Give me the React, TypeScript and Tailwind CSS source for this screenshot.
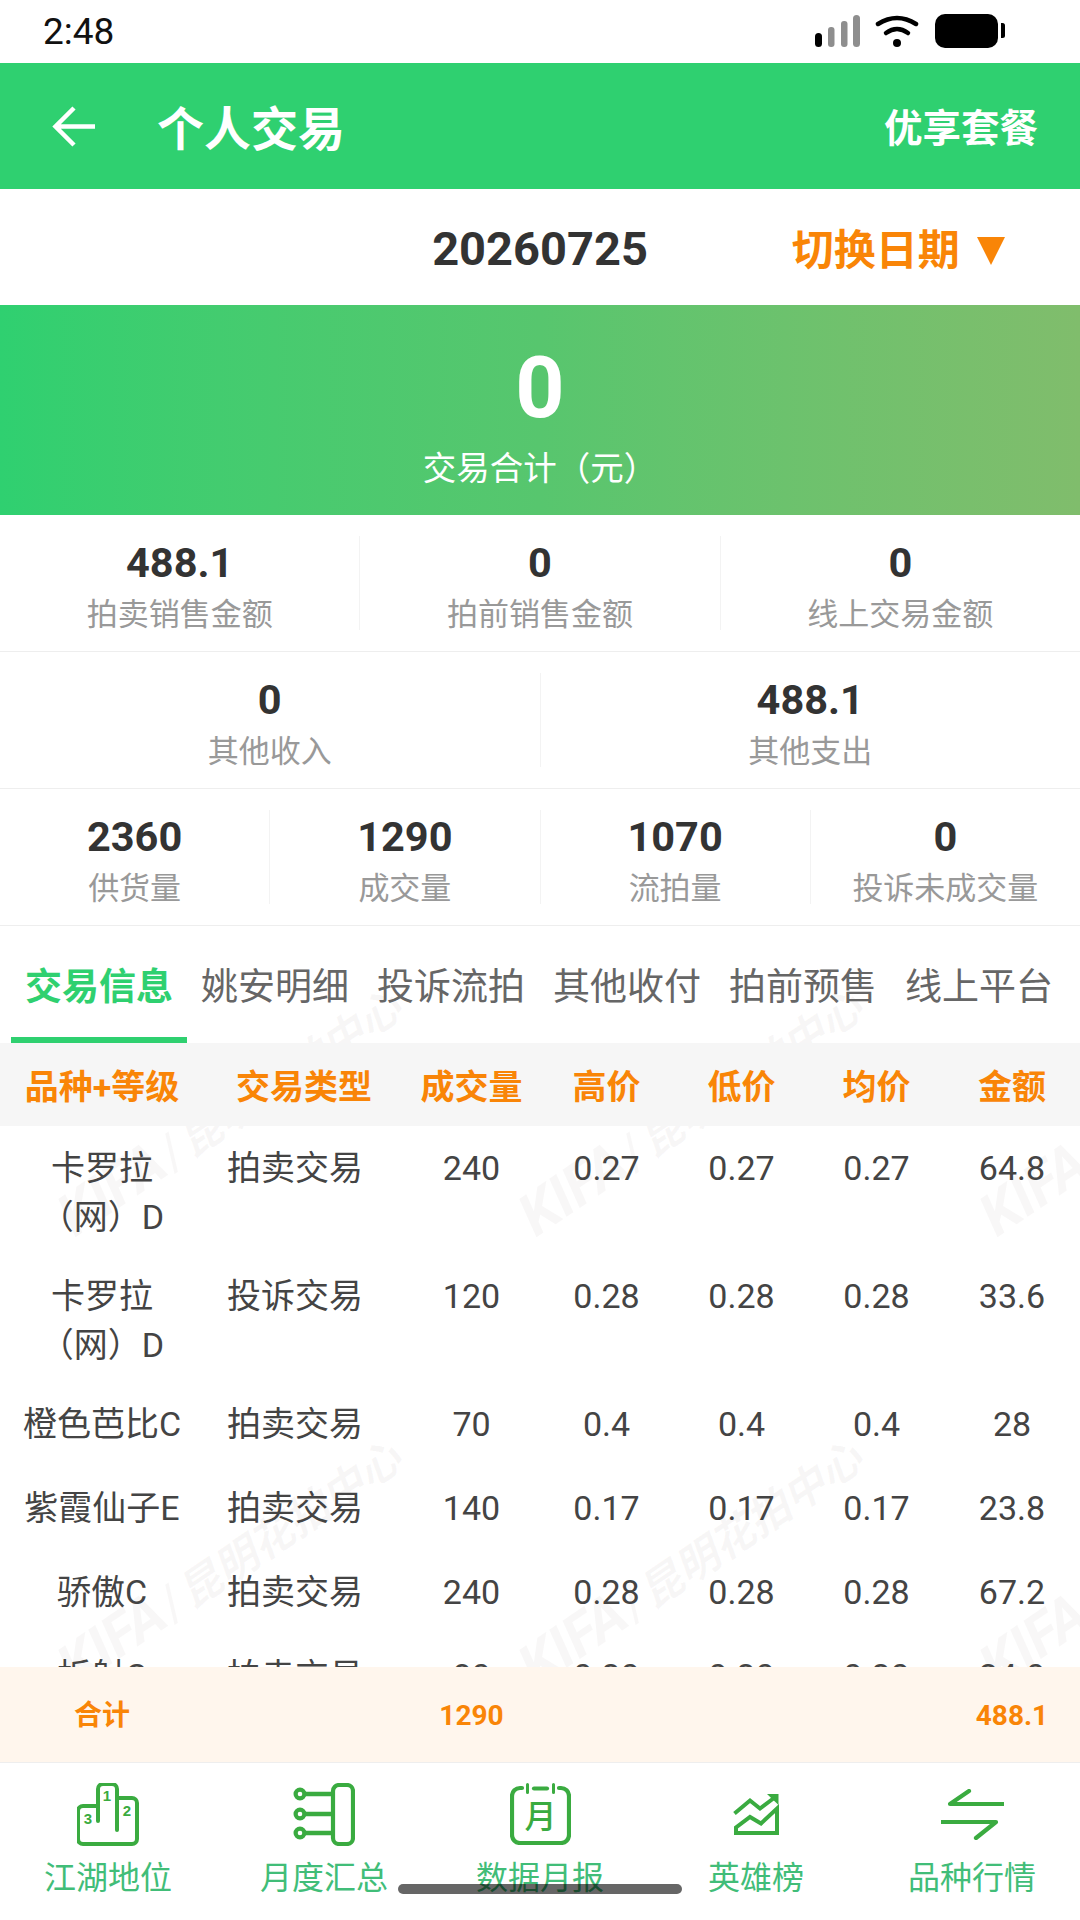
const FONT = "font-[Roboto,'Noto_Sans_CJK_SC',sans-serif]";

function Stat({ value, label }: { value: string; label: string }) {
  return (
    <div className="flex-1 h-[94px] flex flex-col items-center border-r border-[#f3f3f3] last:border-r-0">
      <div className="text-[41.500px] leading-[54px] font-bold text-[#333333]">{value}</div>
      <div className="text-[31px] leading-[50px] text-[#999999] whitespace-nowrap">{label}</div>
    </div>
  );
}

function StatRow({ items }: { items: [string, string][] }) {
  return (
    <div className="h-[137px] pt-[21px] flex border-b border-[#eeeeee] bg-white">
      {items.map(([v, l]) => (
        <Stat key={l} value={v} label={l} />
      ))}
    </div>
  );
}

const GRID = "grid grid-cols-[204px_200px_135px_135px_135px_135px_136px] text-center";

const rows: [string, string, string, string, string, string, string][] = [
  ["卡罗拉\n（网）D", "拍卖交易", "240", "0.27", "0.27", "0.27", "64.8"],
  ["卡罗拉\n（网）D", "投诉交易", "120", "0.28", "0.28", "0.28", "33.6"],
  ["橙色芭比C", "拍卖交易", "70", "0.4", "0.4", "0.4", "28"],
  ["紫霞仙子E", "拍卖交易", "140", "0.17", "0.17", "0.17", "23.8"],
  ["骄傲C", "拍卖交易", "240", "0.28", "0.28", "0.28", "67.2"],
  ["折射C", "拍卖交易", "80", "0.30", "0.30", "0.30", "24.0"],
];

function Mark({ cls }: { cls: string }) {
  return (
    <div className={`absolute flex items-baseline whitespace-nowrap leading-none font-bold italic text-[#8a7070]/[0.06] origin-bottom-left rotate-[-34deg] ${cls}`}>
      <span className="text-[58px] leading-none">KIFA</span>
      <span className="text-[50px] leading-none font-normal not-italic mx-[2px]">/</span>
      <span className="text-[43px] leading-none">昆明花拍中心</span>
    </div>
  );
}

function Watermark() {
  return (
    <div className="absolute inset-0 pointer-events-none">
      <Mark cls="left-[80px] top-[261px]" />
      <Mark cls="left-[541px] top-[261px]" />
      <Mark cls="left-[1002px] top-[261px]" />
      <Mark cls="left-[80px] top-[712px]" />
      <Mark cls="left-[541px] top-[712px]" />
      <Mark cls="left-[1002px] top-[712px]" />
    </div>
  );
}

const navIconCls = "stroke-[#3aab40] fill-none";

function IconPodium() {
  const num = { textAnchor: "middle" as const, fontSize: 15, fontWeight: 700, fontFamily: "Liberation Sans", fill: "#3aab40", stroke: "none" };
  return (
    <svg width="62" height="63" viewBox="0 0 62 63" className={navIconCls} strokeWidth="4" strokeLinecap="round" strokeLinejoin="round">
      <path d="M21 38V6a5 5 0 0 1 5-5h9a5 5 0 0 1 5 5v41" />
      <path d="M40 15h15a5 5 0 0 1 5 5v36a5 5 0 0 1-5 5H6a5 5 0 0 1-5-5V28a5 5 0 0 1 5-5h15" />
      <text x="30" y="18" {...num}>1</text>
      <text x="50" y="33" {...num}>2</text>
      <text x="11" y="41" {...num}>3</text>
    </svg>
  );
}

function IconSummary() {
  return (
    <svg width="62" height="63" viewBox="0 0 62 63" className={navIconCls} strokeWidth="4.200">
      <rect x="40" y="2" width="20" height="59" rx="6" />
      <circle cx="7" cy="11" r="4.400" />
      <circle cx="7" cy="31" r="4.400" />
      <circle cx="7" cy="50" r="4.400" />
      <path d="M11 11h29M11 31h29M11 50h29" strokeWidth="4.500" />
    </svg>
  );
}

function IconCalendar() {
  return (
    <svg width="61" height="62" viewBox="0 0 61 62" className={navIconCls} strokeWidth="4.200" strokeLinecap="round">
      <path d="M12 5h-2a8 8 0 0 0-8 8v39a8 8 0 0 0 8 8h41a8 8 0 0 0 8-8V13a8 8 0 0 0-8-8h-2" />
      <path d="M17.500 1.500v8M43.500 1.500v8" strokeWidth="3" />
      <path d="M24 5.500h13" />
      <text x="30.500" y="45" textAnchor="middle" fontSize="32" fontWeight="500" fontFamily="'Noto Sans CJK SC'" fill="#3aab40" stroke="none">月</text>
    </svg>
  );
}

function IconChart() {
  return (
    <svg width="46" height="41" viewBox="0 0 46 41" className={navIconCls} strokeWidth="4">
      <path d="M1.500 19.500 17 6.500l10 8L41 4" />
      <path d="M34 0h11.500v11z" fill="#3aab40" stroke="none" />
      <path d="M3 39V33.500L17 23l11 6.500L44 14.500V39Z" />
    </svg>
  );
}

function IconSwap() {
  return (
    <svg width="63" height="51" viewBox="0 0 63 51" className={navIconCls} strokeWidth="4.200" strokeLinecap="round" strokeLinejoin="round">
      <path d="M62 15H9L28 2" />
      <path d="M1 33h54L35 49" />
    </svg>
  );
}

const nav: [string, () => React.ReactElement][] = [
  ["江湖地位", IconPodium],
  ["月度汇总", IconSummary],
  ["数据月报", IconCalendar],
  ["英雄榜", IconChart],
  ["品种行情", IconSwap],
];

export default function App() {
  return (
    <div className={`relative w-[1080px] h-[1920px] overflow-hidden bg-white flex flex-col ${FONT}`}>
      {/* status bar */}
      <div className="h-[63px] shrink-0 flex items-center justify-between pl-[43px] pr-[75px] bg-white">
        <span className="text-[37px] leading-none text-[#111111] -mt-[1px]">2:48</span>
        <svg width="190" height="36" viewBox="815 13 190 36" className="-mt-[2px]">
          <rect x="815" y="33" width="7" height="14" rx="3.500" fill="#000" />
          <rect x="828" y="27" width="6.500" height="20" rx="3" fill="#8e8e8e" />
          <rect x="841" y="21" width="6.500" height="26" rx="3" fill="#8e8e8e" />
          <rect x="853" y="15" width="7" height="32" rx="3.500" fill="#8e8e8e" />
          <path d="M878 24q19-12 38 0" fill="none" stroke="#000" strokeWidth="4.500" strokeLinecap="round" />
          <path d="M886 33q11-8 22 0" fill="none" stroke="#000" strokeWidth="4.500" strokeLinecap="round" />
          <circle cx="897" cy="43" r="4" fill="#000" />
          <rect x="935" y="14" width="63" height="34" rx="10" fill="#000" />
          <path d="M1001 23h1.500a2.500 2.500 0 0 1 2.500 2.500v10a2.500 2.500 0 0 1-2.500 2.500H1001Z" fill="#000" />
        </svg>
      </div>

      {/* header */}
      <div className="h-[126px] shrink-0 bg-[#2fd070] flex items-center pl-[52px] pr-[42px] text-white">
        <svg width="43" height="41" viewBox="0 0 43 41" fill="none" stroke="#fff" strokeWidth="4.500">
          <path d="M43 20.500H4M22 2 3.500 20.500 22 39" />
        </svg>
        <span className="ml-[62px] mt-[7px] text-[47px] font-bold leading-none">个人交易</span>
        <span className="ml-auto mt-[7px] text-[38.500px] font-bold leading-none">优享套餐</span>
      </div>

      {/* date */}
      <div className="h-[116px] shrink-0 grid grid-cols-[1fr_auto_1fr] items-center bg-white">
        <span />
        <span className="mt-[3px] text-[47px] font-bold text-[#333333] leading-none">20260725</span>
        <div className="mt-[7px] pl-[144px] flex items-center text-[#f98507] font-bold">
          <span className="text-[42px] leading-none whitespace-nowrap">切换日期</span>
          <span className="ml-[17px] w-0 h-0 border-l-[14px] border-r-[14px] border-t-[28px] border-l-transparent border-r-transparent border-t-[#f98507]" />
        </div>
      </div>

      {/* total */}
      <div className="h-[210px] shrink-0 bg-gradient-to-r from-[#2fd070] via-[#57c66e] to-[#80bd6c] flex flex-col items-center text-white">
        <div className="mt-[36px] text-[86px] leading-[94px] font-bold">0</div>
        <div className="mt-[10px] text-[33.500px] leading-[48px]">交易合计（元）</div>
      </div>

      {/* stats */}
      <StatRow items={[["488.1", "拍卖销售金额"], ["0", "拍前销售金额"], ["0", "线上交易金额"]]} />
      <StatRow items={[["0", "其他收入"], ["488.1", "其他支出"]]} />
      <StatRow items={[["2360", "供货量"], ["1290", "成交量"], ["1070", "流拍量"], ["0", "投诉未成交量"]]} />

      {/* tabs + table */}
      <div className="relative flex-1 min-h-0 overflow-hidden flex flex-col">
        <Watermark />
        <div className="relative h-[117px] shrink-0 flex pl-[11px]">
          {["交易信息", "姚安明细", "投诉流拍", "其他收付", "拍前预售", "线上平台"].map((t, i) => (
            <div
              key={t}
              className={
                i === 0
                  ? "w-[176px] h-full flex items-center justify-center text-[37px] font-bold text-[#2fd070] border-b-[6px] border-[#2fd070] pt-[13px]"
                  : "w-[176px] h-full flex items-center justify-center text-[37px] text-[#666666] pt-[7px]"
              }
            >
              {t}
            </div>
          ))}
        </div>
        <div className={`relative ${GRID} h-[83px] shrink-0 items-center bg-[#f6f6f6] pt-[5px] text-[34px] font-bold text-[#f98507]`}>
          <span>品种+等级</span>
          <span>交易类型</span>
          <span>成交量</span>
          <span>高价</span>
          <span>低价</span>
          <span>均价</span>
          <span>金额</span>
        </div>
        <div className="relative flex-1 min-h-0 overflow-hidden text-[34px] leading-[49px] text-[#444444]">
          {rows.map((r, i) => (
            <div key={i} className={`${GRID} pt-[18px] pb-[12px] min-h-[84px]`}>
              <span className="whitespace-pre-line">{r[0]}</span>
              <span className="pr-[18px]">{r[1]}</span>
              <span>{r[2]}</span>
              <span>{r[3]}</span>
              <span>{r[4]}</span>
              <span>{r[5]}</span>
              <span>{r[6]}</span>
            </div>
          ))}
        </div>
      </div>

      {/* total footer */}
      <div className={`${GRID} h-[96px] shrink-0 items-center bg-[#fff6ed] border-b border-[#eeeeee] pt-[2px] text-[28px] font-bold text-[#f98507]`}>
        <span>合计</span>
        <span />
        <span>1290</span>
        <span />
        <span />
        <span />
        <span>488.1</span>
      </div>

      {/* bottom nav */}
      <div className="h-[157px] shrink-0 flex bg-white">
        {nav.map(([label, Icon]) => (
          <div key={label} className="w-[216px] flex flex-col items-center">
            <div className="h-[93px] pt-[9px] flex items-center justify-center">
              <Icon />
            </div>
            <span className="text-[32px] leading-[44px] text-[#41bd78] whitespace-nowrap">{label}</span>
          </div>
        ))}
      </div>

      {/* home indicator */}
      <div className="absolute left-[398px] top-[1884px] w-[284px] h-[10px] rounded-full bg-black/60" />
    </div>
  );
}
